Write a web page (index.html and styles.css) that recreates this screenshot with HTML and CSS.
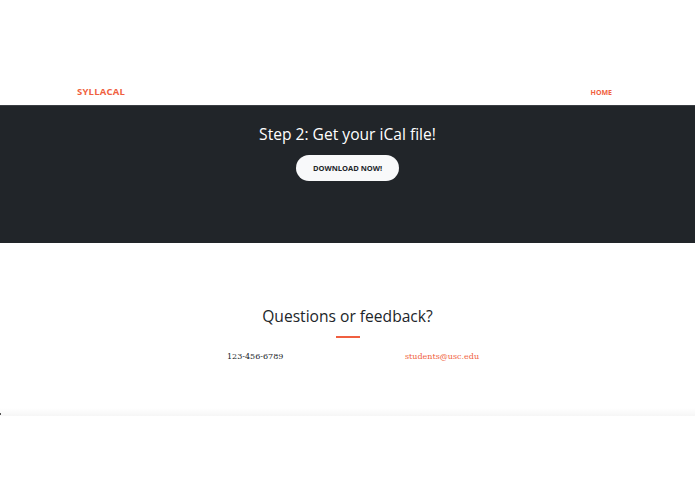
FILE: index.html
```html
<!DOCTYPE html>
<html>
<head>
<meta charset="utf-8">
<link rel="stylesheet" href="styles.css">
</head>
<body>
<div class="top-space"></div>
<nav class="navbar">
  <div class="nav-inner">
    <a class="brand">SYLLACAL</a>
    <a class="nav-link">HOME</a>
  </div>
</nav>
<section class="dark">
  <h2 class="dark-title">Step 2: Get your iCal file!</h2>
  <a class="btn">DOWNLOAD NOW!</a>
</section>
<section class="contact">
  <h2 class="contact-title">Questions or feedback?</h2>
  <hr class="divider">
  <div class="contact-row">
    <div class="phone">123-456-6789</div>
    <div class="email">students@usc.edu</div>
  </div>
</section>
<div class="footer-band"><span class="dot"></span></div>
</body>
</html>
```

FILE: styles.css
```css
html, body {
  margin: 0;
  padding: 0;
  background: #fff;
  font-family: "Open Sans", "Liberation Sans", sans-serif;
}
.top-space {
  height: 78px;
}
.navbar {
  height: 27px;
  background: #fff;
}
.nav-inner {
  width: 541px;
  margin: 0 auto;
  height: 27px;
  display: flex;
  align-items: center;
  justify-content: space-between;
}
.brand {
  color: #f05f40;
  font-weight: 700;
  font-size: 9.5px;
  letter-spacing: 0.2px;
  margin-top: -1px;
}
.nav-link {
  color: #f05f40;
  font-weight: 700;
  font-size: 7px;
  margin-right: 6px;
  margin-top: 1px;
}
.dark {
  background: #212529;
  height: 138px;
  box-sizing: border-box;
  border-top: 1px solid #3a3e43;
  display: flex;
  flex-direction: column;
  align-items: center;
  padding-top: 16px;
}
.dark-title {
  margin: 0;
  color: #fff;
  font-weight: 400;
  font-size: 15.6px;
  line-height: 24px;
}
.btn {
  margin-top: 9px;
  width: 103px;
  height: 26px;
  border-radius: 13px;
  background: #f8f9fa;
  color: #212529;
  font-weight: 700;
  font-size: 7.5px;
  display: flex;
  align-items: center;
  justify-content: center;
}
.contact {
  display: flex;
  flex-direction: column;
  align-items: center;
  padding-top: 61px;
  height: 104px;
}
.contact-title {
  margin: 0;
  color: #212529;
  font-weight: 400;
  font-size: 15.6px;
  line-height: 24px;
}
.divider {
  width: 24px;
  height: 2px;
  border: 0;
  background: #f05f40;
  margin: 8px 0 0 0;
}
.contact-row {
  width: 100%;
  display: flex;
  padding-left: 227px;
  box-sizing: border-box;
  margin-top: 13px;
  font-family: "DejaVu Serif", "Liberation Serif", serif;
  font-size: 8px;
  line-height: 12px;
}
.phone {
  width: 178px;
  color: #212529;
}
.email {
  color: #f05f40;
}
.footer-band {
  position: relative;
  height: 8px;
  background: linear-gradient(#fff, #f6f6f6);
}
.dot {
  position: absolute;
  left: 0;
  top: 5px;
  width: 1px;
  height: 2px;
  background: #555;
}
```
